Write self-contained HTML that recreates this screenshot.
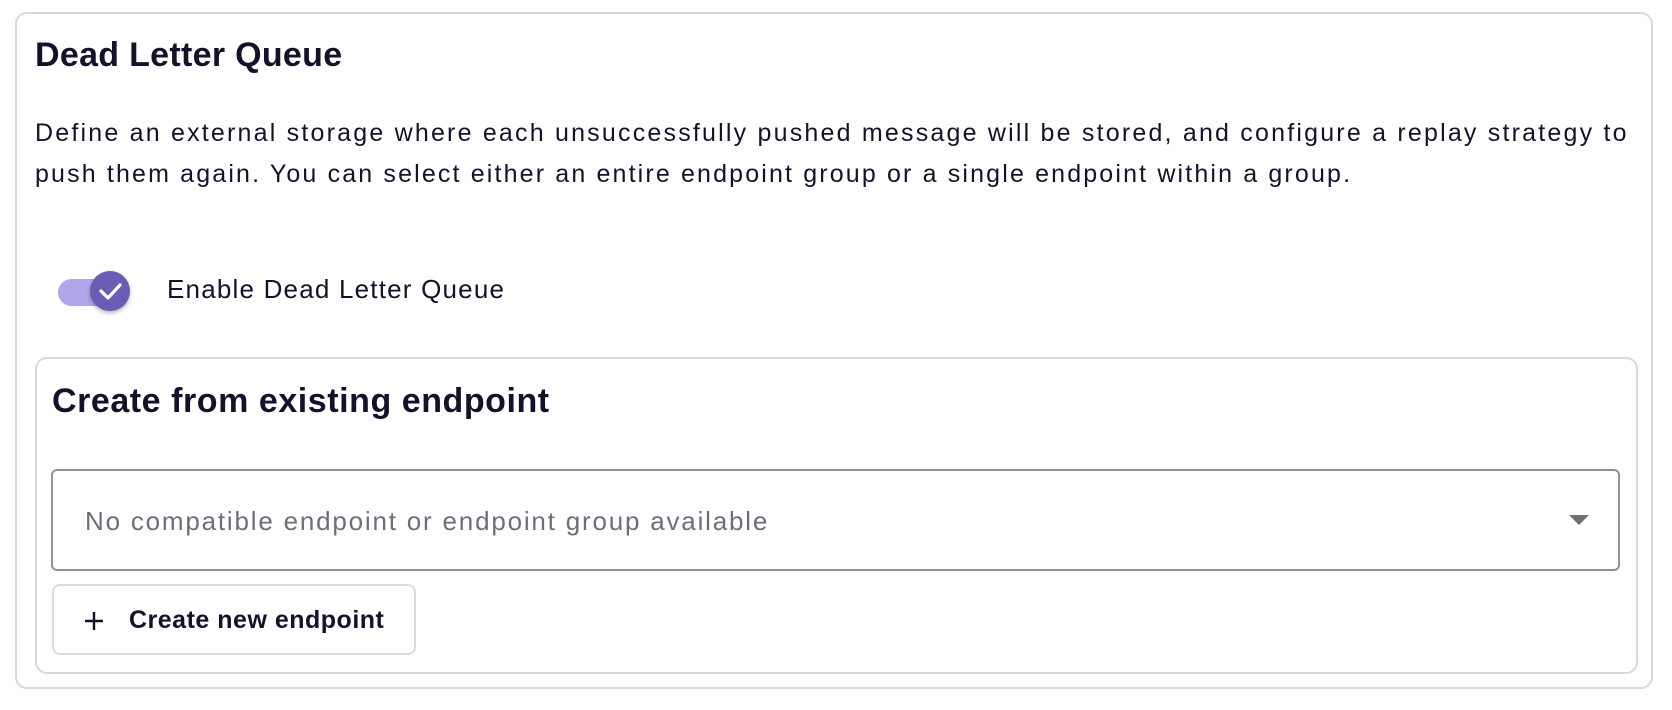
<!DOCTYPE html>
<html><head><meta charset="utf-8"><style>
html,body{margin:0;padding:0;background:#fff;width:1672px;height:710px;overflow:hidden;font-family:"Liberation Sans",sans-serif;color:#14122b}
.abs{position:absolute}
.outer{left:15px;top:12px;width:1638px;height:677px;border:2px solid #d8d8de;border-radius:12px;box-sizing:border-box}
.inner{left:35px;top:357px;width:1603px;height:317px;border:2px solid #d8d8de;border-radius:12px;box-sizing:border-box}
.t{white-space:nowrap;line-height:1}
</style></head><body>
<div class="abs outer"></div>
<div class="abs t" style="left:35px;top:38px;font-size:34px;font-weight:bold;letter-spacing:0.3px">Dead Letter Queue</div>
<div class="abs t" style="left:35px;top:121px;font-size:25px;letter-spacing:2.2px">Define an external storage where each unsuccessfully pushed message will be stored, and configure a replay strategy to</div>
<div class="abs t" style="left:35px;top:162px;font-size:25px;letter-spacing:2.15px">push them again. You can select either an entire endpoint group or a single endpoint within a group.</div>
<div class="abs" style="left:58px;top:279px;width:54px;height:27px;border-radius:14px;background:#b1a6ea"></div>
<div class="abs" style="left:90px;top:271px;width:40px;height:40px;border-radius:50%;background:#6a5bb5;box-shadow:0 2px 4px rgba(0,0,0,.3)"></div>
<svg class="abs" style="left:90px;top:271px" width="40" height="40"><path d="M11 20 L18 27 L30 14" fill="none" stroke="#fff" stroke-width="3.2" stroke-linecap="round" stroke-linejoin="round"/></svg>
<div class="abs t" style="left:167px;top:276px;font-size:26px;letter-spacing:1.2px">Enable Dead Letter Queue</div>
<div class="abs inner"></div>
<div class="abs t" style="left:52px;top:384px;font-size:34px;font-weight:bold;letter-spacing:0.55px">Create from existing endpoint</div>
<div class="abs" style="left:51px;top:469px;width:1569px;height:102px;border:2px solid #929292;border-radius:6px;box-sizing:border-box"></div>
<div class="abs t" style="left:85px;top:508px;font-size:26px;color:#6f6d7d;letter-spacing:1.8px">No compatible endpoint or endpoint group available</div>
<svg class="abs" style="left:1569px;top:515px" width="20" height="12"><path d="M0 0 H20 L10 10 Z" fill="#707070"/></svg>
<div class="abs" style="left:52px;top:584px;width:364px;height:71px;border:2px solid #dcdcdc;border-radius:8px;box-sizing:border-box"></div>
<svg class="abs" style="left:84px;top:611px" width="20" height="20"><path d="M10 1 V19 M1 10 H19" stroke="#14122b" stroke-width="2.4"/></svg>
<div class="abs t" style="left:129px;top:608px;font-size:25px;font-weight:bold;letter-spacing:0.5px">Create new endpoint</div>
</body></html>
